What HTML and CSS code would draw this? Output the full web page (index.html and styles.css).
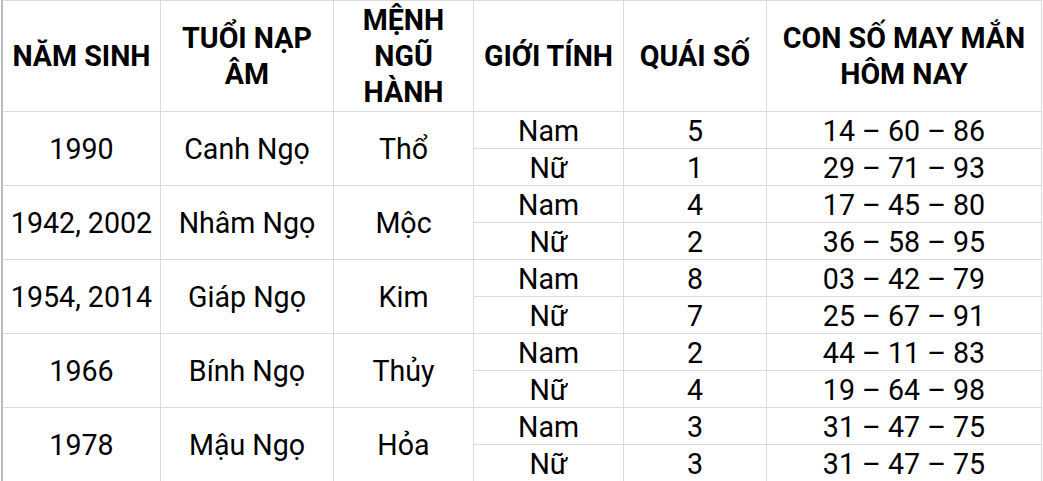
FILE: index.html
```html
<!DOCTYPE html>
<html lang="vi">
<head>
<meta charset="utf-8">
<title>Tuổi Ngọ</title>
<link rel="stylesheet" href="styles.css">
</head>
<body>
<div class="sheet">
  <div class="hd">NĂM SINH</div>
  <div class="hd">TUỔI NẠP<br>ÂM</div>
  <div class="hd">MỆNH<br>NGŨ<br>HÀNH</div>
  <div class="hd">GIỚI TÍNH</div>
  <div class="hd">QUÁI SỐ</div>
  <div class="hd">CON SỐ MAY MẮN<br>HÔM NAY</div>

  <div class="c span2">1990</div>
  <div class="c span2">Canh Ngọ</div>
  <div class="c span2">Thổ</div>
  <div class="c">Nam</div><div class="c">5</div><div class="c">14 – 60 – 86</div>
  <div class="c">Nữ</div><div class="c">1</div><div class="c">29 – 71 – 93</div>

  <div class="c span2">1942, 2002</div>
  <div class="c span2">Nhâm Ngọ</div>
  <div class="c span2">Mộc</div>
  <div class="c">Nam</div><div class="c">4</div><div class="c">17 – 45 – 80</div>
  <div class="c">Nữ</div><div class="c">2</div><div class="c">36 – 58 – 95</div>

  <div class="c span2">1954, 2014</div>
  <div class="c span2">Giáp Ngọ</div>
  <div class="c span2">Kim</div>
  <div class="c">Nam</div><div class="c">8</div><div class="c">03 – 42 – 79</div>
  <div class="c">Nữ</div><div class="c">7</div><div class="c">25 – 67 – 91</div>

  <div class="c span2">1966</div>
  <div class="c span2">Bính Ngọ</div>
  <div class="c span2">Thủy</div>
  <div class="c">Nam</div><div class="c">2</div><div class="c">44 – 11 – 83</div>
  <div class="c">Nữ</div><div class="c">4</div><div class="c">19 – 64 – 98</div>

  <div class="c span2">1978</div>
  <div class="c span2">Mậu Ngọ</div>
  <div class="c span2">Hỏa</div>
  <div class="c">Nam</div><div class="c">3</div><div class="c">31 – 47 – 75</div>
  <div class="c">Nữ</div><div class="c">3</div><div class="c">31 – 47 – 75</div>
</div>
</body>
</html>
```

FILE: styles.css
```css
html, body {
  margin: 0;
  padding: 0;
  background: #ffffff;
  overflow: hidden;
}

.sheet {
  display: grid;
  grid-template-columns: 157px 172px 139px 149px 142px 274px;
  grid-template-rows: 110px repeat(10, 36px);
  gap: 1px;
  background: #dadada;
  padding: 1px 1px 0 0;
  margin-left: 1px;
  border-left: 2px solid #bdbdbd;
  width: max-content;
  font-family: Roboto, "Noto Sans", sans-serif;
  color: #000;
}

.hd, .c {
  background: #fff;
  display: flex;
  align-items: center;
  justify-content: center;
  text-align: center;
  overflow: hidden;
  white-space: nowrap;
}

.hd {
  font-weight: 700;
  font-size: 28.6px;
  line-height: 36px;
}

.c {
  font-size: 28.6px;
  line-height: 34px;
  padding-top: 1px;
  box-sizing: border-box;
}

.span2 {
  grid-row: span 2;
  padding-top: 0;
}
```
